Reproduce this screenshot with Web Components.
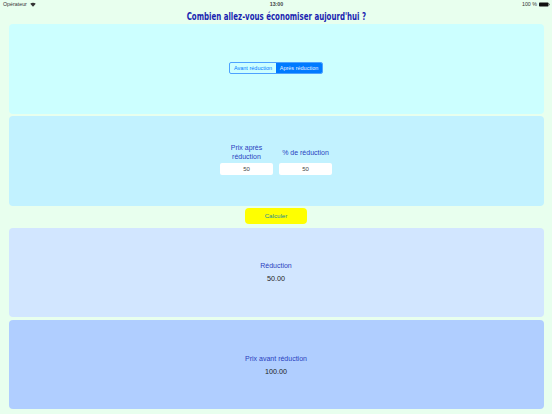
<!DOCTYPE html>
<html lang="fr">
<head>
<meta charset="utf-8">
<title>Combien allez-vous économiser</title>
<style>
  html, body { margin: 0; height: 100%; }
  body { background: #e8ffee; font-family: "Liberation Sans", Arial, sans-serif; }
</style>
</head>
<body>
<savings-app></savings-app>

<script>
class StatusBar extends HTMLElement {
  constructor() {
    super();
    this.attachShadow({ mode: "open" });
    this.shadowRoot.innerHTML = `
      <style>
        :host {
          display: grid;
          grid-template-columns: 1fr auto 1fr;
          align-items: center;
          height: 9px;
          padding: 0 2px 0 3px;
          font: 5.3px/9px "Liberation Sans", sans-serif;
          color: #333;
        }
        .left { display: flex; align-items: center; gap: 3px; }
        .right { display: flex; align-items: center; justify-content: flex-end; gap: 2px; }
        .time { font-weight: bold; color: #444; }
        svg { display: block; }
      </style>
      <div class="left">
        <span>Opérateur</span>
        <svg width="6" height="5" viewBox="0 0 12 10"><path d="M6 9.5 0.5 3.6C3.7.8 8.3.8 11.5 3.6Z" fill="#333"/></svg>
      </div>
      <span class="time">13:00</span>
      <div class="right">
        <span>100 %</span>
        <svg width="11" height="5" viewBox="0 0 22 10"><rect x="0" y="1" width="19" height="8" rx="1.5" fill="#111"/><rect x="20" y="3.5" width="1.5" height="3" fill="#555"/></svg>
      </div>
    `;
  }
}

class SegPicker extends HTMLElement {
  constructor() {
    super();
    this.attachShadow({ mode: "open" });
    this.shadowRoot.innerHTML = `
      <style>
        :host {
          display: inline-flex;
          height: 10px;
          margin-top: -1px;
          border: 1px solid #4da2ff;
          border-radius: 2px;
          overflow: hidden;
          font: 5.5px/10px "Liberation Sans", sans-serif;
          color: #007aff;
        }
        span { display: block; width: 46px; text-align: center; }
        .on { background: #007aff; color: #e6f2ff; }
      </style>
      <span>Avant réduction</span>
      <span class="on">Après réduction</span>
    `;
  }
}

class AppPanel extends HTMLElement {
  constructor() {
    super();
    this.attachShadow({ mode: "open" });
    this.shadowRoot.innerHTML = `
      <style>
        :host {
          display: flex;
          flex-direction: column;
          align-items: center;
          justify-content: center;
          height: 89.5px;
          border-radius: 4px;
          background: var(--panel, #ccffff);
        }
      </style>
      <slot></slot>
    `;
  }
}

class FieldBox extends HTMLElement {
  constructor() {
    super();
    this.attachShadow({ mode: "open" });
    this.shadowRoot.innerHTML = `
      <style>
        :host { display: flex; flex-direction: column; width: 53px; }
        .label {
          display: flex;
          align-items: center;
          justify-content: center;
          height: 17px;
          font: 7px/8.5px "Liberation Sans", sans-serif;
          color: #2a3fc0;
          text-align: center;
          margin-bottom: 2px;
        }
        .input {
          height: 12px;
          background: #fff;
          border-radius: 2px;
          font: 6px/12px "Liberation Sans", sans-serif;
          color: #444;
          text-align: center;
        }
      </style>
      <div class="label"><div><slot></slot></div></div>
      <div class="input">${this.getAttribute("value") || ""}</div>
    `;
  }
}

class ResultBlock extends HTMLElement {
  constructor() {
    super();
    this.attachShadow({ mode: "open" });
    this.shadowRoot.innerHTML = `
      <style>
        :host { display: flex; flex-direction: column; align-items: center; gap: 3px; padding-top: 1px; }
        .label { font: 7px/10px "Liberation Sans", sans-serif; color: #2a3fc0; }
        .value { font: 7.2px/10px "Liberation Sans", sans-serif; color: #222; }
      </style>
      <div class="label"><slot></slot></div>
      <div class="value">${this.getAttribute("value") || ""}</div>
    `;
  }
}

class SavingsApp extends HTMLElement {
  constructor() {
    super();
    this.attachShadow({ mode: "open" });
    this.shadowRoot.innerHTML = `
      <style>
        :host {
          display: flex;
          flex-direction: column;
          width: 552px;
          height: 414px;
          overflow: hidden;
        }
        h1 {
          display: flex;
          justify-content: center;
          margin: 0;
          height: 15px;
        }
        h1 span {
          white-space: nowrap;
          font: bold 10.5px/14px "DejaVu Sans Condensed", "DejaVu Sans", sans-serif;
          color: #1a1fb0;
          transform: scaleX(0.745);
        }
        .stack {
          display: flex;
          flex-direction: column;
          gap: 2.7px;
          padding: 0 8.5px;
        }
        .fields { display: flex; gap: 6px; margin-top: -2px; }
        button {
          display: block;
          align-self: center;
          width: 62px;
          height: 16px;
          margin: 0 0 0.5px;
          padding: 0;
          border: 0;
          border-radius: 4px;
          background: #ffff00;
          color: #1a8a9a;
          font: 6.2px/16px "Liberation Sans", sans-serif;
        }
        .p1 { --panel: #ccffff; }
        .p2 { --panel: #c2f2ff; }
        .p3 { --panel: #d2e6ff; }
        .p4 { --panel: #b0ceff; }
      </style>
      <status-bar></status-bar>
      <h1><span>Combien allez-vous économiser aujourd'hui ?</span></h1>
      <div class="stack">
        <app-panel class="p1"><seg-picker></seg-picker></app-panel>
        <app-panel class="p2">
          <div class="fields">
            <field-box value="50">Prix après réduction</field-box>
            <field-box value="50">% de réduction</field-box>
          </div>
        </app-panel>
        <button>Calculer</button>
        <app-panel class="p3"><result-block value="50.00">Réduction</result-block></app-panel>
        <app-panel class="p4"><result-block value="100.00">Prix avant réduction</result-block></app-panel>
      </div>
    `;
  }
}

customElements.define("status-bar", StatusBar);
customElements.define("seg-picker", SegPicker);
customElements.define("app-panel", AppPanel);
customElements.define("field-box", FieldBox);
customElements.define("result-block", ResultBlock);
customElements.define("savings-app", SavingsApp);
</script>
</body>
</html>
